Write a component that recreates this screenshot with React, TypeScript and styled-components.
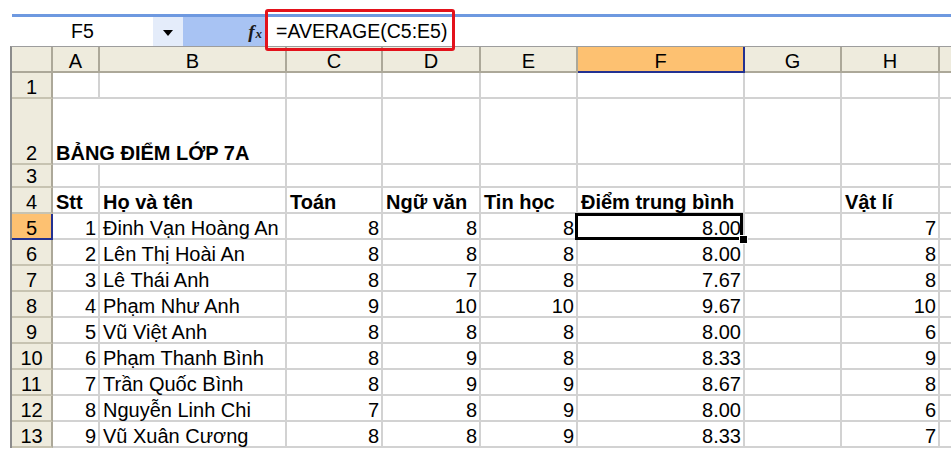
import React from "react";
import styled, { createGlobalStyle } from "styled-components";

const GlobalStyle = createGlobalStyle`
  html, body {
    margin: 0;
    padding: 0;
    background: #ffffff;
    overflow: hidden;
  }
  body {
    font-family: "Liberation Sans", Arial, sans-serif;
    color: #000;
  }
`;

const COL_WIDTHS = [41, 47, 187, 96, 98, 97, 167, 97, 98, 100];
const LETTERS = ["A", "B", "C", "D", "E", "F", "G", "H", ""];
// header, rows 1..13
const ROW_HEIGHTS = [26, 26, 66, 23, 26, 26, 26, 26, 26, 26, 26, 26, 26, 26];

const GRID = "#d2d2d2";
const HEAD_BG = "#eeebdd";
const HEAD_LINE = "#aca899";
const ACTIVE_BG = "#fdc171";
const ACTIVE_LINE = "#233191";

const Page = styled.div`
  position: relative;
  width: 951px;
  height: 459px;
  padding: 14px 0 0 10px;
  box-sizing: border-box;
  overflow: hidden;
  background: #fff;
`;

const FormulaBar = styled.div`
  display: flex;
  height: 32px;
  margin-left: 2px;
  border-top: 3px solid #6e99e0;
  box-shadow: inset 0 1px 0 #bcd0f4;
  box-sizing: border-box;
  font-size: 19.5px;
  line-height: 29px;
`;

const NameBox = styled.div`
  width: 141px;
  background: #fff;
  text-align: center;
`;

const DropButton = styled.div`
  width: 30px;
  display: flex;
  align-items: center;
  justify-content: center;
  background: #e4ecfa;
`;

const Arrow = styled.span`
  width: 0;
  height: 0;
  margin-top: 2px;
  border-left: 5px solid transparent;
  border-right: 5px solid transparent;
  border-top: 6px solid #000;
`;

const FxZone = styled.div`
  width: 82px;
  background: #a8c3f3;
  text-align: right;
  padding-right: 3px;
  box-sizing: border-box;
`;

const FxGlyph = styled.span`
  font-family: "Liberation Serif", "Times New Roman", serif;
  font-style: italic;
  font-weight: bold;
  font-size: 19px;
  color: #1a1a1a;

  small {
    font-size: 13px;
    margin-left: 1px;
  }
`;

const FormulaInput = styled.div`
  flex: 1;
  background: #fff;
  padding-left: 11px;
  white-space: nowrap;
`;

const Callout = styled.div`
  position: absolute;
  left: 265px;
  top: 9px;
  width: 190px;
  height: 42px;
  border: 3px solid #e3121b;
  border-radius: 3px;
  box-sizing: border-box;
  pointer-events: none;
`;

const Sheet = styled.div`
  display: grid;
  grid-template-columns: ${COL_WIDTHS.map((w) => `${w}px`).join(" ")};
  grid-template-rows: ${ROW_HEIGHTS.map((h) => `${h}px`).join(" ")};
  overflow: hidden;
  border-left: 2px solid #8c8c8c;
  border-top: 1px solid #9d9d9d;
  font-size: 20px;
  line-height: 20px;
`;

const HeadBase = styled.div`
  display: flex;
  align-items: flex-end;
  justify-content: center;
  box-sizing: border-box;
  white-space: nowrap;
`;

const Corner = styled(HeadBase)`
  background: ${HEAD_BG};
  border-right: 2px solid ${HEAD_LINE};
  border-bottom: 2px solid ${HEAD_LINE};
`;

const ColHeader = styled(HeadBase)<{ $active?: boolean }>`
  background: ${(p) => (p.$active ? ACTIVE_BG : HEAD_BG)};
  border-right: 2px solid ${(p) => (p.$active ? ACTIVE_LINE : HEAD_LINE)};
  border-bottom: 2px solid ${(p) => (p.$active ? ACTIVE_LINE : HEAD_LINE)};
`;

const RowHeader = styled(HeadBase)<{ $active?: boolean }>`
  background: ${(p) => (p.$active ? ACTIVE_BG : HEAD_BG)};
  border-right: 2px solid ${(p) => (p.$active ? ACTIVE_LINE : HEAD_LINE)};
  border-bottom: 2px solid ${(p) => (p.$active ? ACTIVE_LINE : "#c7c3b1")};
`;

const Cell = styled.div<{
  $right?: boolean;
  $bold?: boolean;
  $span?: number;
  $selected?: boolean;
}>`
  position: relative;
  display: flex;
  align-items: flex-end;
  justify-content: ${(p) => (p.$right ? "flex-end" : "flex-start")};
  grid-column: span ${(p) => p.$span || 1};
  padding: 0 2px 0 3px;
  box-sizing: border-box;
  border-right: 2px solid ${GRID};
  border-bottom: 2px solid ${GRID};
  font-weight: ${(p) => (p.$bold ? "bold" : "normal")};
  white-space: nowrap;
  z-index: ${(p) => (p.$selected ? 2 : 0)};

  ${(p) =>
    p.$selected &&
    `
    &::after {
      content: "";
      position: absolute;
      left: -3px;
      top: -1px;
      right: 0px;
      bottom: -2px;
      border: 3px solid #000;
    }
    &::before {
      content: "";
      position: absolute;
      right: -4px;
      bottom: -5px;
      width: 7px;
      height: 7px;
      background: #000;
      outline: 1px solid #fff;
      z-index: 1;
    }
  `}
`;

type CellDef = { text: string; bold?: boolean; span?: number };

const students: string[][] = [
  ["1", "Đinh Vạn Hoàng An", "8", "8", "8", "8.00", "", "7"],
  ["2", "Lên Thị Hoài An", "8", "8", "8", "8.00", "", "8"],
  ["3", "Lê Thái Anh", "8", "7", "8", "7.67", "", "8"],
  ["4", "Phạm Như Anh", "9", "10", "10", "9.67", "", "10"],
  ["5", "Vũ Việt Anh", "8", "8", "8", "8.00", "", "6"],
  ["6", "Phạm Thanh Bình", "8", "9", "8", "8.33", "", "9"],
  ["7", "Trần Quốc Bình", "8", "9", "9", "8.67", "", "8"],
  ["8", "Nguyễn Linh Chi", "7", "8", "9", "8.00", "", "6"],
  ["9", "Vũ Xuân Cương", "8", "8", "9", "8.33", "", "7"],
];

const header = ["Stt", "Họ và tên", "Toán", "Ngữ văn", "Tin học", "Điểm trung bình", "", "Vật lí"];

const rows: { n: number; cells: CellDef[] }[] = [
  { n: 1, cells: [] },
  { n: 2, cells: [{ text: "BẢNG ĐIỂM LỚP 7A", bold: true, span: 2 }] },
  { n: 3, cells: [] },
  { n: 4, cells: header.map((t) => ({ text: t, bold: true })) },
  ...students.map((s, i) => ({ n: i + 5, cells: s.map((t) => ({ text: t })) })),
];

const isNumber = (t: string) => /^[\d.]+$/.test(t);

const App: React.FC = () => {
  return (
    <>
      <GlobalStyle />
      <Page>
        <FormulaBar>
          <NameBox>F5</NameBox>
          <DropButton>
            <Arrow />
          </DropButton>
          <FxZone>
            <FxGlyph>
              f<small>x</small>
            </FxGlyph>
          </FxZone>
          <FormulaInput>=AVERAGE(C5:E5)</FormulaInput>
        </FormulaBar>
        <Callout />

        <Sheet>
          <Corner />
          {LETTERS.map((l, i) => (
            <ColHeader key={i} $active={l === "F"}>
              {l}
            </ColHeader>
          ))}

          {rows.map((row) => {
            const out: React.ReactNode[] = [
              <RowHeader key={`h${row.n}`} $active={row.n === 5}>
                {row.n}
              </RowHeader>,
            ];
            let col = 0;
            while (col < LETTERS.length) {
              const def = row.cells[col] || { text: "" };
              const span = def.span || 1;
              out.push(
                <Cell
                  key={`${row.n}-${col}`}
                  $span={span}
                  $bold={def.bold}
                  $right={!def.bold && isNumber(def.text)}
                  $selected={row.n === 5 && col === 5}
                >
                  {def.text}
                </Cell>
              );
              col += span;
            }
            return <React.Fragment key={row.n}>{out}</React.Fragment>;
          })}
        </Sheet>
      </Page>
    </>
  );
};

export default App;
